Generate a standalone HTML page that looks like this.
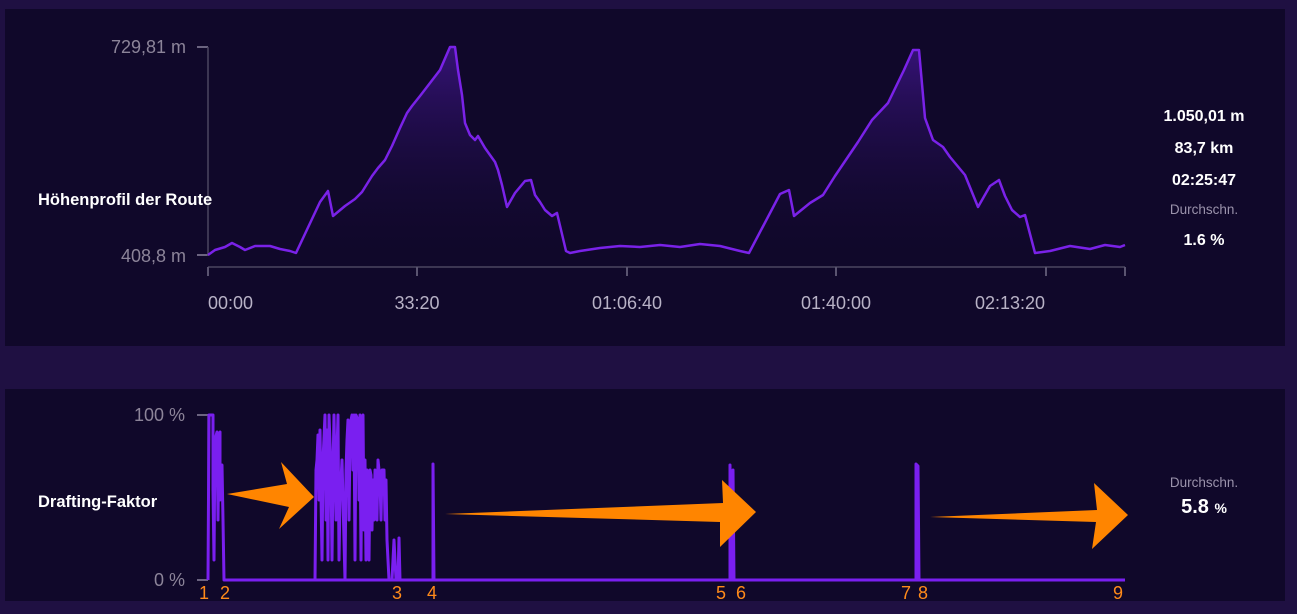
<!DOCTYPE html>
<html><head><meta charset="utf-8"><style>
html,body{margin:0;padding:0;width:1297px;height:614px;overflow:hidden;background:#1f1042;font-family:"Liberation Sans",sans-serif}
.p{position:absolute;background:#10082a}
svg{position:absolute;left:0;top:0}
</style></head><body>
<div class="p" style="left:5px;top:9px;width:1280px;height:337px"></div>
<div class="p" style="left:5px;top:389px;width:1280px;height:212px"></div>
<svg width="1297" height="614" viewBox="0 0 1297 614">
<defs><linearGradient id="g" x1="0" y1="0" x2="0" y2="1"><stop offset="0" stop-color="#3a1480" stop-opacity="0.9"/><stop offset="1" stop-color="#10082a" stop-opacity="0"/></linearGradient></defs>
<g font-family="Liberation Sans, sans-serif">
<text x="186" y="53" fill="#8c8499" font-size="18" text-anchor="end">729,81 m</text>
<text x="186" y="262" fill="#8c8499" font-size="18" text-anchor="end">408,8 m</text>
<line x1="197" y1="47" x2="208" y2="47" stroke="#6b6480" stroke-width="2"/>
<line x1="197" y1="255" x2="208" y2="255" stroke="#6b6480" stroke-width="2"/>
<line x1="208" y1="47" x2="208" y2="256" stroke="#4b4560" stroke-width="1.5"/>
<line x1="208" y1="267" x2="1125" y2="267" stroke="#4b4560" stroke-width="1.5"/>
<g stroke="#5a5470" stroke-width="2"><line x1="208" y1="267" x2="208" y2="276"/><line x1="417" y1="267" x2="417" y2="276"/><line x1="627" y1="267" x2="627" y2="276"/><line x1="836" y1="267" x2="836" y2="276"/><line x1="1046" y1="267" x2="1046" y2="276"/><line x1="1125" y1="267" x2="1125" y2="276"/></g>
<g fill="#b8b2c6" font-size="18"><text x="208" y="309">00:00</text><text x="417" y="309" text-anchor="middle">33:20</text><text x="627" y="309" text-anchor="middle">01:06:40</text><text x="836" y="309" text-anchor="middle">01:40:00</text><text x="1010" y="309" text-anchor="middle">02:13:20</text></g>
<text x="38" y="205" fill="#fff" font-size="16.5" font-weight="bold">Höhenprofil der Route</text>
<path fill="url(#g)" d="M208,255 L215,250 225,247 232,243 240,247 245,250 255,246 270,246 280,249 290,251 296,253 320,202 328,191 333,216 345,206 355,199 362,192 372,176 378,168 385,160 392,146 400,128 407,113 412,106 420,96 440,70 450,47 455,47 458,70 462,95 465,123 470,135 475,140 478,136 485,148 495,162 498,170 502,185 507,207 515,193 525,181 531,180 535,195 540,202 545,210 552,216 557,213 566,251 570,253 580,251 600,248 620,246 640,247 660,245 680,247 700,244 720,246 740,251 749,253 780,194 789,190 794,216 810,203 823,195 835,176 858,142 872,120 888,103 904,70 913,50 919,50 925,118 933,140 943,147 950,157 965,175 978,207 990,186 999,180 1005,196 1012,210 1020,217 1025,215 1035,253 1050,251 1070,246 1090,249 1105,245 1120,247 1125,245 L1125,267 208,267Z"/>
<polyline fill="none" stroke="#7a22e8" stroke-width="2.5" stroke-linejoin="round" points="208,255 215,250 225,247 232,243 240,247 245,250 255,246 270,246 280,249 290,251 296,253 320,202 328,191 333,216 345,206 355,199 362,192 372,176 378,168 385,160 392,146 400,128 407,113 412,106 420,96 440,70 450,47 455,47 458,70 462,95 465,123 470,135 475,140 478,136 485,148 495,162 498,170 502,185 507,207 515,193 525,181 531,180 535,195 540,202 545,210 552,216 557,213 566,251 570,253 580,251 600,248 620,246 640,247 660,245 680,247 700,244 720,246 740,251 749,253 780,194 789,190 794,216 810,203 823,195 835,176 858,142 872,120 888,103 904,70 913,50 919,50 925,118 933,140 943,147 950,157 965,175 978,207 990,186 999,180 1005,196 1012,210 1020,217 1025,215 1035,253 1050,251 1070,246 1090,249 1105,245 1120,247 1125,245"/>
<g fill="#fff" font-weight="bold" text-anchor="middle"><text x="1204" y="121" font-size="16">1.050,01 m</text><text x="1204" y="153" font-size="16">83,7 km</text><text x="1204" y="185" font-size="16">02:25:47</text><text x="1204" y="245" font-size="16">1.6 %</text><text x="1204" y="513" font-size="20">5.8 <tspan font-size="14">%</tspan></text></g>
<g fill="#9a92ab" font-size="13.5" text-anchor="middle"><text x="1204" y="214">Durchschn.</text><text x="1204" y="487">Durchschn.</text></g>
<text x="185" y="421" fill="#8c8499" font-size="18" text-anchor="end">100 %</text>
<text x="185" y="586" fill="#8c8499" font-size="18" text-anchor="end">0 %</text>
<line x1="197" y1="415" x2="208" y2="415" stroke="#6b6480" stroke-width="2"/>
<line x1="197" y1="580" x2="208" y2="580" stroke="#6b6480" stroke-width="2"/>
<line x1="208" y1="415" x2="208" y2="580" stroke="#4b4560" stroke-width="1.5"/>
<text x="38" y="507" fill="#fff" font-size="16.5" font-weight="bold">Drafting-Faktor</text>
<g fill="none" stroke="#7a1ff0" stroke-width="3" stroke-linejoin="round">
<polyline points="208,580 209,415 213,415 213,490 214,560 215,440 217,432 218,520 219,440 220,432 220,500 221,470 222,465 223,520 224,580 400,580 1125,580"/>
<polyline points="315,580 316,470 317,460 318,435 319,500 320,430 322,560 323,460 325,415 326,520 327,430 328,560 329,415 331,470 332,560 333,470 334,415 336,520 337,450 338,415 339,560 340,500 342,460 345,580 346,470 347,440 348,420 349,520 350,440 351,420 352,415 353,470 354,415 355,560 356,415 358,420 359,500 360,415 361,560 362,420 363,415 364,530 365,460 366,560 367,470 369,560 370,470 371,475 372,530 373,480 374,520 375,470 377,520 378,460 380,480 381,520 382,470 384,470 385,520 386,480 387,540 388,560 389,580 392,580 394,540 395,560 396,580 398,580 399,538 400,580"/>
<polyline points="433,580 433,464 434,580"/>
<polyline points="730,580 730,465 731,580 733,470 734,580"/>
<polyline points="916,580 916,464 918,466 919,580"/>
</g>
<g fill="#ff8500">
<polygon points="227,494 287,484 281,462 314,497 279,529 289,507"/>
<polygon points="445,514 723,503 722,480 756,512 720,547 720,522"/>
<polygon points="930,517 1097,510 1094,483 1128,515 1092,549 1096,522"/>
</g>
<g fill="#ff8a1a" font-size="18"><text x="199" y="599">1</text><text x="220" y="599">2</text><text x="392" y="599">3</text><text x="427" y="599">4</text><text x="716" y="599">5</text><text x="736" y="599">6</text><text x="901" y="599">7</text><text x="918" y="599">8</text><text x="1113" y="599">9</text></g>
</g>
</svg>
</body></html>
